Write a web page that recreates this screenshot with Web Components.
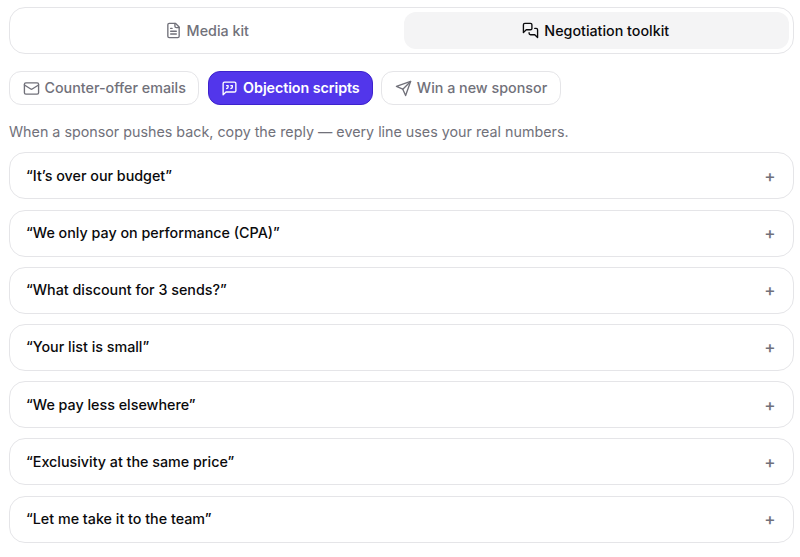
<!DOCTYPE html>
<html lang="en">
<head>
<meta charset="utf-8">
<title>Negotiation toolkit</title>
<style>
  :root {
    --text-color: #0a0a0c;
    --muted-color: #71717a;
    --border-color: #e5e5e8;
    --active-bg: #f4f4f5;
    --accent: #5236eb;
    --accent-border: #3d22cc;
  }

  body {
    margin: 0;
    padding: 7px 6px 0 9px;
    background: #fff;
    color: var(--text-color);
    font-family: Inter, "Liberation Sans", sans-serif;
    font-size: 14.3px;
    line-height: 20px;
  }
</style>
</head>
<body>
<toolkit-page>
  <tab-bar>
    <tab-item data-icon="file">Media kit</tab-item>
    <tab-item data-icon="messages" data-active>Negotiation toolkit</tab-item>
  </tab-bar>
  <chip-row>
    <chip-button data-icon="mail">Counter-offer emails</chip-button>
    <chip-button data-icon="quote" data-active>Objection scripts</chip-button>
    <chip-button data-icon="send">Win a new sponsor</chip-button>
  </chip-row>
  <hint-text>When a sponsor pushes back, copy the reply — every line uses your real numbers.</hint-text>
  <script-list>
    <script-item>“It’s over our budget”</script-item>
    <script-item>“We only pay on performance (CPA)”</script-item>
    <script-item>“What discount for 3 sends?”</script-item>
    <script-item>“Your list is small”</script-item>
    <script-item>“We pay less elsewhere”</script-item>
    <script-item>“Exclusivity at the same price”</script-item>
    <script-item>“Let me take it to the team”</script-item>
  </script-list>
</toolkit-page>

<script>
const icons = {
  file: '<path d="M15 2H6a2 2 0 0 0-2 2v16a2 2 0 0 0 2 2h12a2 2 0 0 0 2-2V7Z"/><path d="M14 2v4a2 2 0 0 0 2 2h4"/><path d="M10 9H8"/><path d="M16 13H8"/><path d="M16 17H8"/>',
  messages: '<path d="M14 9a2 2 0 0 1-2 2H6l-4 4V4a2 2 0 0 1 2-2h8a2 2 0 0 1 2 2Z"/><path d="M18 9h2a2 2 0 0 1 2 2v11l-4-4h-6a2 2 0 0 1-2-2v-1"/>',
  mail: '<rect width="20" height="16" x="2" y="4" rx="2"/><path d="m22 7-8.97 5.7a1.94 1.94 0 0 1-2.06 0L2 7"/>',
  quote: '<path d="M21 15a2 2 0 0 1-2 2H7l-4 4V5a2 2 0 0 1 2-2h14a2 2 0 0 1 2 2Z"/><path d="M8 12a2 2 0 0 0 2-2V8H8"/><path d="M14 12a2 2 0 0 0 2-2V8h-2"/>',
  send: '<path d="m22 2-7 20-4-9-9-4Z"/><path d="M22 2 11 13"/>'
}

class BaseElement extends HTMLElement {
  constructor() {
    super()
    this.attachShadow({ mode: 'open' })
  }

  connectedCallback() {
    this.shadowRoot.innerHTML = `<style>${this.constructor.css}</style>${this.template()}`
  }

  template() {
    return '<slot></slot>'
  }
}

class UiIcon extends BaseElement {
  static css = `
    :host { display: block; flex: none; width: 17px; height: 17px; }
    svg { display: block; width: 100%; height: 100%; }
  `

  template() {
    return `
      <svg viewBox="0 0 24 24" fill="none" stroke="currentColor" stroke-width="1.9"
        stroke-linecap="round" stroke-linejoin="round" aria-hidden="true">
        ${icons[this.dataset.name]}
      </svg>
    `
  }
}

class ToolkitPage extends BaseElement {
  static css = ':host { display: flex; flex-direction: column; }'
}

class TabBar extends BaseElement {
  static css = `
    :host {
      display: grid;
      grid-template-columns: 1fr 1fr;
      gap: 4px;
      box-sizing: border-box;
      height: 47px;
      padding: 4px;
      border: 1px solid var(--border-color);
      border-radius: 16px;
    }
  `
}

class TabItem extends BaseElement {
  static css = `
    :host { display: grid; color: var(--muted-color); font-weight: 500; }
    :host([data-active]) { color: var(--text-color); }
    button {
      display: flex;
      align-items: center;
      justify-content: center;
      gap: 5px;
      padding: 0;
      border: 0;
      border-radius: 12px;
      background: none;
      color: inherit;
      font: inherit;
    }
    :host([data-active]) button { padding-right: 1px; background: var(--active-bg); }
  `

  template() {
    return `
      <button type="button">
        <ui-icon data-name="${this.dataset.icon}"></ui-icon>
        <span><slot></slot></span>
      </button>
    `
  }
}

class ChipRow extends BaseElement {
  static css = ':host { display: flex; gap: 8.2px; margin-top: 17px; }'
}

class ChipButton extends BaseElement {
  static css = `
    :host { display: block; color: var(--muted-color); font-weight: 500; }
    :host([data-active]) { color: #fff; font-weight: 600; letter-spacing: -0.07px; }
    button {
      display: flex;
      align-items: center;
      gap: 5px;
      box-sizing: border-box;
      height: 34.3px;
      padding: 0 12.5px;
      border: 1px solid var(--border-color);
      border-radius: 12px;
      background: #fff;
      color: inherit;
      font: inherit;
      letter-spacing: inherit;
      white-space: nowrap;
    }
    :host([data-active]) button {
      border-color: var(--accent-border);
      background: var(--accent);
    }
  `

  template() {
    return `
      <button type="button">
        <ui-icon data-name="${this.dataset.icon}"></ui-icon>
        <span><slot></slot></span>
      </button>
    `
  }
}

class HintText extends BaseElement {
  static css = ':host { display: block; margin-top: 17px; color: var(--muted-color); }'
}

class ScriptList extends BaseElement {
  static css = ':host { display: flex; flex-direction: column; gap: 10.2px; margin-top: 10.1px; }'
}

class ScriptItem extends BaseElement {
  static css = `
    :host {
      display: flex;
      align-items: center;
      justify-content: space-between;
      box-sizing: border-box;
      height: 47px;
      padding: 0 17.5px 0 16px;
      border: 1px solid var(--border-color);
      border-radius: 16px;
      font-weight: 500;
    }
    .toggle { color: var(--muted-color); font-size: 17px; font-weight: 500; }
  `

  template() {
    return `
      <span><slot></slot></span>
      <span class="toggle">+</span>
    `
  }
}

customElements.define('ui-icon', UiIcon)
customElements.define('toolkit-page', ToolkitPage)
customElements.define('tab-bar', TabBar)
customElements.define('tab-item', TabItem)
customElements.define('chip-row', ChipRow)
customElements.define('chip-button', ChipButton)
customElements.define('hint-text', HintText)
customElements.define('script-list', ScriptList)
customElements.define('script-item', ScriptItem)
</script>
</body>
</html>
